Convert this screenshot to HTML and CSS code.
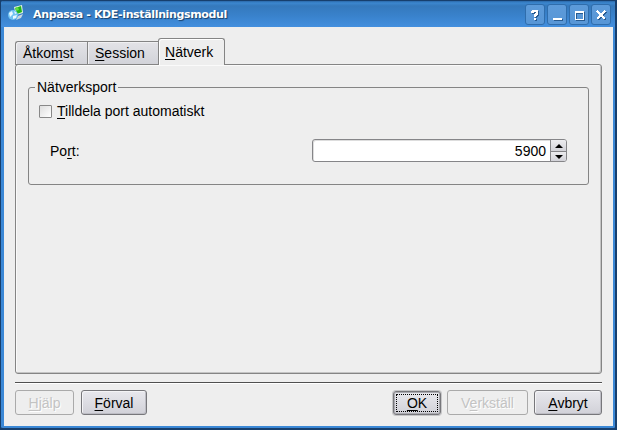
FILE: index.html
```html
<!DOCTYPE html>
<html lang="sv">
<head>
<meta charset="utf-8">
<title>Anpassa - KDE-inställningsmodul</title>
<link rel="stylesheet" href="styles.css">
</head>
<body>
<div class="window">
  <header class="titlebar">
    <svg class="app-icon" width="16" height="16" viewBox="0 0 16 16">
      <path d="M6 2 14 0 15 8 8 10Z" fill="#e4f5df"/>
      <path d="M7 3 13 1 14 7 9 9Z" fill="#22b51b"/>
      <path d="M7 3 10 2 11 5 8 6Z" fill="#62dc45"/>
      <path d="M10 11 15 9 13 13 8 15Z" fill="#c9d7df"/>
      <circle cx="5" cy="10" r="5" fill="#70c3f2"/>
      <path d="M1 8 4 6 5 9 2 12ZM6 6 9 8 7 9ZM5 11 9 10 8 13 5 14Z" fill="#e8f8ff"/>
    </svg>
    <h1 class="title">Anpassa - KDE-inställningsmodul</h1>
    <div class="controls">
      <button class="control" aria-label="Hjälp"><svg viewBox="0 0 18 18"><path d="M6 7V6h1V5h4v3h-1v1H9v2M9 12v2" fill="none" stroke="#fff" stroke-width="2"/></svg></button>
      <button class="control" aria-label="Minimera"><svg viewBox="0 0 18 18"><path d="M5 13h9" stroke="#fff" stroke-width="2"/></svg></button>
      <button class="control" aria-label="Maximera"><svg viewBox="0 0 18 18"><path d="M5 6h9M5.5 6v8M13.5 6v8M5 13.5h9" fill="none" stroke="#fff"/><path d="M5 6h9" stroke="#fff" stroke-width="2"/></svg></button>
      <button class="control" aria-label="Stäng"><svg viewBox="0 0 18 18"><path d="m5 5 8 8M13 5l-8 8" stroke="#fff" stroke-width="2.3"/></svg></button>
    </div>
  </header>
  <main class="content">
    <nav class="tabs">
      <span class="tab access"><span class="t-access">Åtko<u>m</u>st</span></span>
      <span class="tab session"><span class="t-session"><u>S</u>ession</span></span>
      <span class="tab active"><span class="t-network"><u>N</u>ätverk</span></span>
    </nav>
    <section class="panel">
      <fieldset class="group">
        <legend><span class="t-legend">Nätverksport</span></legend>
        <label class="check-row"><span class="checkbox"></span><span class="t-check"><u>T</u>illdela port automatiskt</span></label>
        <div class="port-row">
          <span class="t-port">Po<u>r</u>t:</span>
          <div class="spin">
            <span class="value">5900</span>
            <span class="arrows">
              <span class="arrow"><svg width="8" height="4" viewBox="0 0 8 4"><path d="M0 4 4 0 8 4Z"/></svg></span>
              <span class="arrow"><svg width="8" height="4" viewBox="0 0 8 4"><path d="M0 0 4 4 8 0Z"/></svg></span>
            </span>
          </div>
        </div>
      </fieldset>
    </section>
    <div class="separator"></div>
    <footer class="buttons">
      <button class="btn help disabled"><span class="t-help"><u>H</u>jälp</span></button>
      <button class="btn defaults"><span class="t-defaults"><u>F</u>örval</span></button>
      <button class="btn ok"><span class="t-ok"><u>O</u>K</span></button>
      <button class="btn apply disabled"><span class="t-apply">V<u>e</u>rkställ</span></button>
      <button class="btn cancel"><span class="t-cancel"><u>A</u>vbryt</span></button>
    </footer>
  </main>
</div>
</body>
</html>
```

FILE: styles.css
```css
* { box-sizing: border-box; }
body { margin: 0; background: #173f6d; font: 14px/16px "Liberation Sans", Arial, sans-serif; color: #000; }
button { font: inherit; padding: 0; margin: 0; }
u { text-decoration-thickness: 1px; text-underline-offset: 2px; text-decoration-skip-ink: none; }
.window { width: 617px; height: 430px; border: 1px solid #173f6d; border-right-width: 2px; border-bottom-width: 2px; border-radius: 3px; background: #3b88d6; padding: 0 2px 2px 3px; overflow: hidden; }
.titlebar { height: 26px; margin: 0 -2px 0 -3px; padding: 3px 4px 0 7px; display: flex; align-items: flex-start; background: linear-gradient(#2b68a8 0, #3c87cf 2px, #3579bc 5px, #3982cc 15px, #438fde 26px); }
.app-icon { margin-top: 1px; flex: none; }
.title { margin: 3px auto 0 9px; font: bold 11px/16px "DejaVu Sans", sans-serif; color: #fff; text-shadow: 1px 1px 1px #173e69; white-space: nowrap; letter-spacing: -.35px; }
.controls { display: flex; gap: 2px; }
.control { width: 20px; height: 21px; border: 1px solid #2f6dac; border-radius: 3px; background: linear-gradient(#5d9bda, #5796d6); color: #fff; }
.control svg { display: block; width: 18px; height: 18px; filter: drop-shadow(1px 1px 0 #285b91); shape-rendering: crispEdges; }
.content { height: 399px; background: #eee; padding: 11px 11px 0; }
.tabs { display: flex; align-items: flex-end; height: 27px; position: relative; z-index: 1; }
.tab { height: 24px; margin-bottom: 0; border: 1px solid #848484; border-right: 0; background: linear-gradient(#e3e3e7, #d2d3d9); padding: 3px 0 0 7px; box-shadow: inset 1px 1px #f0f0f2; }
.access { width: 72px; border-radius: 3px 0 0; }
.session { width: 71px; padding-left: 7px; }
.active { width: 67px; height: 27px; border-right: 1px solid #848484; border-bottom: 0; border-radius: 3px 3px 0 0; background: #eee; padding: 5px 0 0 6px; box-shadow: inset 1px 1px #fff; }
.panel { height: 310px; margin-top: -1px; border: 1px solid #848484; border-radius: 3px; box-shadow: inset 1px 1px #fafafa, inset -1px -1px #c4c4c4; padding: 14px 12px; }
.group { margin: 0; padding: 0; border: 1px solid #848484; border-radius: 3px; height: 106px; min-width: 0; }
legend { margin-left: 6px; padding: 0 2px; height: 16px; }
.check-row { display: flex; align-items: center; gap: 5px; margin: 8px 0 0 10px; height: 16px; }
.checkbox { width: 13px; height: 13px; border: 1px solid #888; border-radius: 1px; background: linear-gradient(135deg, #dedede, #fff); }
.port-row { display: flex; justify-content: space-between; margin: 20px 21px 0; height: 23px; align-items: center; }
.spin { width: 255px; height: 23px; border: 1px solid #858588; border-radius: 3px; background: #fff; display: flex; justify-content: flex-end; overflow: hidden; box-shadow: inset 1px 1px #ddd; }
.value { padding: 3px 4px 0 0; }
.arrows { width: 16px; border-left: 1px solid #858588; display: grid; grid-template-rows: 11px 10px; }
.arrow { display: flex; align-items: center; justify-content: center; background: linear-gradient(#ececef, #d2d2d8); }
.arrow + .arrow { border-top: 1px solid #858588; }
.separator { height: 2px; margin-top: 8px; border-top: 1px solid #505050; background: #fff; }
.buttons { display: flex; margin-top: 6px; height: 25px; align-items: center; }
.btn { height: 25px; border: 1px solid #77777b; border-radius: 3px; background: linear-gradient(#e8e8ed, #d1d1d8); box-shadow: inset 1px 1px #f4f4f6, inset -1px -1px #bdbdc4; display: flex; align-items: center; justify-content: center; white-space: nowrap; }
.disabled { border-color: #aaa; background: #eee; color: #c3c3c3; text-shadow: 1px 1px #fff; box-shadow: none; }
.help { width: 59px; }
.defaults { width: 66px; margin-left: 7px; }
.ok { width: 48px; height: 24px; margin-left: auto; position: relative; box-shadow: 0 0 0 1px #c6c6c8, inset 0 0 0 1px #aaaab0; }
.ok::after { content: ""; position: absolute; inset: 2px; border: 1px dotted #000; }
.apply { width: 81px; margin-left: 6px; }
.cancel { width: 68px; margin-left: 6px; }
```
